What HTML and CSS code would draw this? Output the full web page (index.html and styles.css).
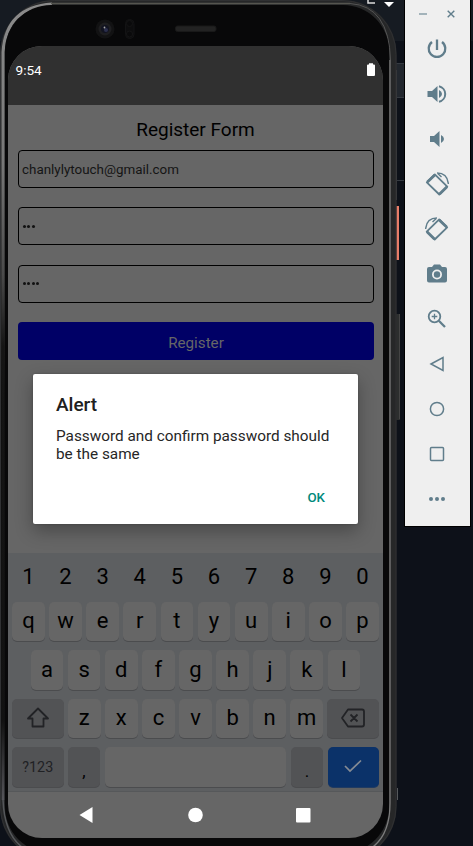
FILE: index.html
```html
<!DOCTYPE html>
<html lang="en">
<head>
<meta charset="utf-8">
<title>Register Form</title>
<link rel="stylesheet" href="styles.css">
</head>
<body>
<svg class="backdrop" width="473" height="846" viewBox="0 0 473 846" aria-hidden="true">
  <defs>
    <linearGradient id="rim" x1="0" y1="0" x2="0" y2="1">
      <stop offset="0" stop-color="#8b8b8b"/><stop offset=".2" stop-color="#777"/><stop offset=".34" stop-color="#4a4a4a"/><stop offset=".43" stop-color="#151515"/><stop offset=".9" stop-color="#121212"/><stop offset="1" stop-color="#55555a"/>
    </linearGradient>
    <linearGradient id="edge" x1="0" y1="0" x2="0" y2="1">
      <stop offset="0" stop-color="#262728"/><stop offset=".35" stop-color="#222"/><stop offset=".45" stop-color="#0c0c0c"/><stop offset="1" stop-color="#101112"/>
    </linearGradient>
  </defs>
  <rect width="473" height="846" fill="#0d1119"/>
  <rect width="473" height="41" fill="#161b22"/>
  <rect x="390" y="63" width="14" height="35" fill="#22272e"/>
  <path d="M390 63.500h14M390 97.500h14M390 180.500h14" stroke="#353a41"/>
  <path d="M368 0v3h7M368 -1h7" stroke="#ddd" stroke-width="1.500" fill="none"/>
  <path d="M384 2h10l-5 5z" fill="#fff"/>
  <rect x="395" y="206" width="4" height="54" fill="#e87d68"/>
  <rect x="395" y="314" width="5" height="106" fill="#2c2e2e"/>
  <path d="M399.500 314v105" stroke="#444"/>
  <path d="M396.500 70v130M397.500 788v12" stroke="#55585b"/>
  <rect x="0" y="0" width="396.500" height="861" rx="54" fill="#262728"/>
  <path d="M0 60H5V800H0Z" fill="url(#edge)"/>
  <rect x=".5" y=".5" width="395.500" height="860" rx="54" fill="none" stroke="#303133"/>
  <path d="M390 60V803Q390 850 350 856" fill="none" stroke="#7c7c7c" stroke-width="1.300"/>
  <path d="M390.500 60Q389 6 350 3.500" fill="none" stroke="#555"/>
  <path d="M3 800V52Q6 7 52 4" fill="none" stroke="url(#rim)" stroke-width="3"/>
  <path d="M3 800Q5 848 40 855" fill="none" stroke="#55575a" stroke-width="1.500"/>
  <path d="M51 3.500H350" stroke="#55554f" stroke-width="1.500"/>
  <rect x="5" y="5" width="384" height="848" rx="46" fill="#080809"/>
  <circle cx="105" cy="29" r="9.500" fill="#121213"/><circle cx="105" cy="29" r="6.500" fill="#1e1e20"/><circle cx="105" cy="29" r="4" fill="#111320"/><circle cx="106" cy="30" r="2" fill="#2b2f4c"/><circle cx="104.500" cy="27.500" r=".9" fill="#aaa"/>
  <rect x="125.500" y="19.500" width="8.500" height="19" rx="4" fill="#0d0d0e" stroke="#131314"/>
  <circle cx="129.500" cy="23.500" r="3" fill="#0a0a0b" stroke="#151516"/><circle cx="129.500" cy="34" r="3" fill="#0a0a0b" stroke="#151516"/>
  <rect x="175.500" y="26" width="40.500" height="5.500" rx="2" fill="#222" stroke="#191919"/>
</svg>

<div class="stage">
  <main class="screen">
    <header class="status">
      <span>9:54</span>
      <svg width="8" height="13" viewBox="0 0 8 13"><path d="M0 2.500Q0 1.500 1 1.500H2V.3H6V1.500H7Q8 1.500 8 2.500V12Q8 13 7 13H1Q0 13 0 12Z" fill="#fff"/></svg>
    </header>
    <section class="form">
      <h1>Register Form</h1>
      <div class="field">chanlylytouch@gmail.com</div>
      <div class="field"><span class="dots"><i></i><i></i><i></i></span></div>
      <div class="field"><span class="dots"><i></i><i></i><i></i><i></i></span></div>
      <div class="submit">Register</div>
    </section>
    <section class="keyboard">
      <div class="row numbers"><b>1</b><b>2</b><b>3</b><b>4</b><b>5</b><b>6</b><b>7</b><b>8</b><b>9</b><b>0</b></div>
      <div class="row"><b>q</b><b>w</b><b>e</b><b>r</b><b>t</b><b>y</b><b>u</b><b>i</b><b>o</b><b>p</b></div>
      <div class="row middle"><b>a</b><b>s</b><b>d</b><b>f</b><b>g</b><b>h</b><b>j</b><b>k</b><b>l</b></div>
      <div class="row">
        <b class="wide"><svg width="24" height="24" viewBox="0 0 24 24"><path d="M12 2.500L2 12.500H6.500V20.500H17.500V12.500H22Z" fill="none" stroke="#222326" stroke-width="1.800" stroke-linejoin="round"/></svg></b>
        <b>z</b><b>x</b><b>c</b><b>v</b><b>b</b><b>n</b><b>m</b>
        <b class="wide"><svg width="26" height="20" viewBox="0 0 26 20"><path d="M8 1.500H22Q24 1.500 24 3.500V16.500Q24 18.500 22 18.500H8L2 10Z M10.500 6.500l7 7m0-7l-7 7" fill="none" stroke="#222326" stroke-width="1.800" stroke-linejoin="round"/></svg></b>
      </div>
      <div class="row last">
        <b class="wide label">?123</b><b class="dark punct">,</b><b class="space"></b><b class="dark punct">.</b>
        <b class="wide enter"><svg width="18" height="14" viewBox="0 0 18 14"><path d="M1 7l5 5L17 1.500" fill="none" stroke="#858b94" stroke-width="1.700"/></svg></b>
      </div>
    </section>
    <nav class="nav">
      <svg width="375" height="46" viewBox="0 0 375 46"><path d="M71.500 23L84.500 15V31Z" fill="#fff"/><circle cx="187.500" cy="23" r="7.300" fill="#fff"/><rect x="288" y="16" width="14.500" height="14.500" rx="1" fill="#fff"/></svg>
    </nav>
  </main>

  <aside class="tools">
    <div class="window">
      <svg width="8" height="8" viewBox="0 0 8 8"><path d="M0 4h8" stroke-width="1.500" opacity=".7"/></svg>
      <svg width="8" height="8" viewBox="0 0 8 8"><path d="M.7 .7l6.600 6.600M7.300 .7L.7 7.300" stroke-width="1.400"/></svg>
    </div>
    <svg class="tool" viewBox="0 0 24 24"><path d="M12 2.500V13M7 5A8.300 8.300 0 1 0 17 5" stroke-width="2.300"/></svg>
    <svg class="tool" viewBox="0 0 24 24"><path class="solid" d="M2.500 9H7L12.500 4V20L7 15H2.500Z"/><path class="solid" d="M14 8Q17 9.500 17 12T14 16Z"/><path d="M14 4.200A8 8 0 0 1 14 19.800" stroke-width="2"/></svg>
    <svg class="tool" viewBox="0 0 24 24"><path class="solid" d="M5 9H9L14.500 4V20L9 15H5ZM16 8Q19 9.500 19 12T16 16Z"/></svg>
    <svg class="tool" viewBox="0 0 24 24"><path d="M9.800 2.400L22.300 14.600L14.300 22.500L1.800 10.300Z" stroke-width="1.800" stroke-linejoin="round"/><path d="M2.400 10L9.800 2.900M14.600 21.900L22 14.800" stroke-width="2.800"/><path d="M12 .9Q22.500 1 23.400 12M12.500 1.200L16.500 5" stroke-width="1.400"/></svg>
    <svg class="tool" viewBox="0 0 24 24"><path d="M14.200 2.400L1.700 14.600L9.700 22.500L22.200 10.300Z" stroke-width="1.800" stroke-linejoin="round"/><path d="M21.600 10L14.200 2.900M9.400 21.900L2 14.800" stroke-width="2.800"/><path d="M12 .9Q1.500 1 .6 12M11.500 1.200L7.500 5" stroke-width="1.400"/></svg>
    <svg class="tool" viewBox="0 0 24 24"><path class="solid" fill-rule="evenodd" d="M4 5H7L9 2.500H15L17 5H20Q22 5 22 7V18.500Q22 20.500 20 20.500H4Q2 20.500 2 18.500V7Q2 5 4 5ZM12 7.500A5 5 0 1 0 12 17.500A5 5 0 1 0 12 7.500Z"/><circle class="solid" cx="12" cy="12.500" r="3.200"/></svg>
    <svg class="tool" viewBox="0 0 24 24"><circle cx="9.500" cy="9.500" r="5.800" stroke-width="1.800"/><path d="M13.800 13.800L20 20" stroke-width="2.300"/><path d="M9.500 6.700v5.600M6.700 9.500h5.600" stroke-width="1.300"/></svg>
    <svg class="tool" viewBox="0 0 24 24"><path d="M6 12L18 5.500V18.500Z" stroke-width="1.500"/></svg>
    <svg class="tool" viewBox="0 0 24 24"><circle cx="12" cy="12" r="6.600" stroke-width="1.500"/></svg>
    <svg class="tool" viewBox="0 0 24 24"><rect x="5.500" y="5.500" width="13" height="13" rx="1" stroke-width="1.500"/></svg>
    <svg class="tool" viewBox="0 0 24 24"><g class="solid"><circle cx="6" cy="12" r="2"/><circle cx="12" cy="12" r="2"/><circle cx="18" cy="12" r="2"/></g></svg>
  </aside>
</div>

<div class="dialog" role="alertdialog">
  <h2>Alert</h2>
  <p>Password and confirm password should be the same</p>
  <div class="ok">OK</div>
</div>
</body>
</html>
```
FILE: styles.css
```css
* { box-sizing: border-box; }
body {
  margin: 0;
  width: 473px;
  height: 846px;
  overflow: hidden;
  background: #0d1119;
  font-family: Roboto, sans-serif;
  position: relative;
}
svg { display: block; flex: none; }
h1, h2, p { margin: 0; font-weight: 400; }
.backdrop { position: absolute; inset: 0; }
.stage {
  position: relative;
  display: flex;
  align-items: flex-start;
  gap: 21px;
  padding-left: 8px;
}
.screen {
  width: 375px;
  height: 792px;
  margin-top: 46px;
  border-radius: 34px;
  overflow: hidden;
  background: #666;
  display: flex;
  flex-direction: column;
  flex: none;
}
.status {
  height: 59px;
  background: #303030;
  color: #fff;
  font-size: 13.6px;
  line-height: 16px;
  display: flex;
  justify-content: space-between;
  align-items: flex-start;
  padding: 17px 8px 0 7.5px;
}
.status span { margin-top: -1px; }
.form {
  height: 448px;
  padding: 13px 9px 0 10px;
  color: #000;
}
.form h1 {
  font-size: 19px;
  line-height: 24px;
  text-align: center;
  margin: 0 1px 8px 0;
}
.field {
  height: 38px;
  margin-bottom: 19.300px;
  border: 1px solid #000;
  border-radius: 4px;
  padding-left: 3px;
  display: flex;
  align-items: center;
  font-size: 13.4px;
  color: #151515;
}
.dots { display: flex; gap: 1.500px; padding-left: .5px; }
.dots i { width: 3px; height: 3px; border-radius: 50%; background: #111; }
.submit {
  height: 38px;
  border-radius: 4px;
  background: #000066;
  color: #666;
  display: flex;
  align-items: center;
  justify-content: center;
  padding-top: 4px;
  font-size: 15.2px;
}
.keyboard {
  height: 239px;
  background: #5d5f61;
  border-bottom: 1px solid #56585a;
  padding: 0 4px;
  display: flex;
  flex-direction: column;
  gap: 9px;
}
.row { display: flex; gap: 4.300px; height: 39.400px; flex: none; }
.row b {
  flex: 1 1 0;
  min-width: 0;
  font-weight: 400;
  font-size: 22px;
  line-height: 26px;
  color: #000;
  background: #666;
  border-radius: 5px;
  box-shadow: 0 1px 0 #4b4c4e;
  display: flex;
  align-items: center;
  justify-content: center;
  padding-bottom: 1px;
}
.row.numbers { height: 40px; }
.row.numbers b { background: none; box-shadow: none; padding-top: 7px; padding-bottom: 0; }
.row.middle { padding: 0 18.500px; }
.row b.wide { flex: 0 0 51.500px; background: #525355; }
.row b.dark { flex: 0 0 32.500px; background: #525355; }
.row b.label { font-size: 14.300px; color: #202124; padding-bottom: 0; }
.row b.punct { padding-top: 10px; font-size: 17px; }
.row b.enter { background: #0b3269; box-shadow: 0 1px 0 #203b62; }
.nav { height: 46px; }

.tools {
  width: 67px;
  height: 527px;
  border: solid #000;
  border-width: 0 1px 1px;
  padding-right: 2px;
  background: #efefef;
  display: flex;
  flex-direction: column;
  align-items: center;
  gap: 21px;
  flex: none;
}
.tools svg { fill: none; stroke: #607d8b; }
.tools .solid { fill: #607d8b; stroke: none; }
.tool { width: 24px; height: 24px; }
.window {
  display: flex;
  gap: 20px;
  height: 16px;
  padding-top: 10px;
}

.dialog {
  position: absolute;
  left: 33px;
  top: 374px;
  width: 325px;
  height: 150px;
  background: #fff;
  border-radius: 2px;
  box-shadow: 0 7px 18px rgba(0, 0, 0, .3), 0 0 2px rgba(0, 0, 0, .25);
  padding: 20px 23px;
}
.dialog h2 {
  font-weight: 500;
  font-size: 19px;
  line-height: 22px;
  color: #202020;
}
.dialog p {
  margin-top: 11px;
  font-size: 15.330px;
  line-height: 18px;
  color: #262626;
}
.ok {
  margin-top: 27px;
  padding-right: 10px;
  text-align: right;
  font-weight: 500;
  font-size: 13.300px;
  line-height: 16px;
  color: #00897b;
}
```
